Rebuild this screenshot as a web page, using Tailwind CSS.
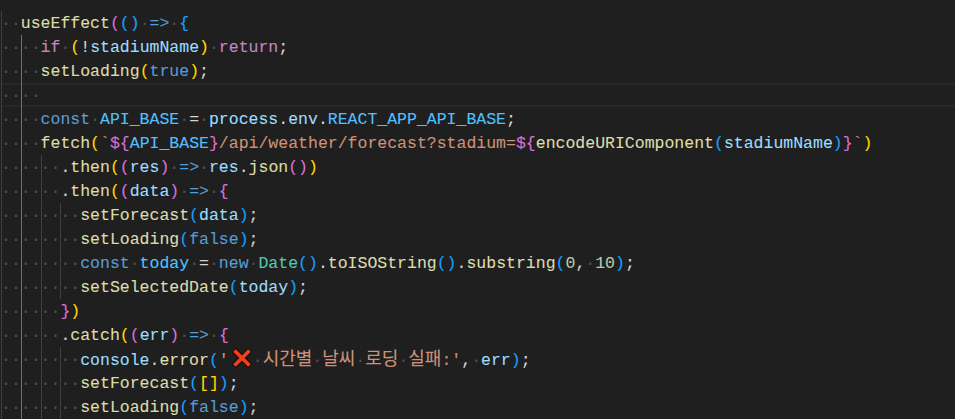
<!DOCTYPE html>
<html lang="en">
<head>
  <meta charset="UTF-8">
  <title>useEffect</title>
  <script src="https://cdn.jsdelivr.net/npm/@tailwindcss/browser@4"></script>
</head>
<body class="bg-[#1f1f1f] overflow-hidden">
  <div class="w-[955px] h-[419px] overflow-hidden pt-[11px] pl-px font-['Liberation_Mono','Noto_Sans_CJK_KR',monospace] text-[16.5px] text-[#d4d4d4] [-webkit-text-stroke:0.1px] [&>div]:whitespace-pre [&>div]:h-6 [&>div]:leading-[26px] [&_i]:not-italic [&_i]:inline-block [&_i]:w-[19.8px] [&_i]:h-6 [&_i]:align-top [&_i]:text-[#505050] [&_b]:font-normal [&_b]:text-[#505050]">
    <div><i class="shadow-[inset_1px_0_0_#404040]">··</i><span class="text-[#dcdcaa]">useEffect</span><span class="text-[#da70d6]">(</span><span class="text-[#179fff]">()</span><b>·</b><span class="text-[#569cd6]">=&gt;</span><b>·</b><span class="text-[#179fff]">{</span></div>
    <div><i class="shadow-[inset_1px_0_0_#404040]">··</i><i class="shadow-[inset_1px_0_0_#707070]">··</i><span class="text-[#c586c0]">if</span><b>·</b><span class="text-[#ffd700]">(</span>!<span class="text-[#9cdcfe]">stadiumName</span><span class="text-[#ffd700]">)</span><b>·</b><span class="text-[#c586c0]">return</span>;</div>
    <div><i class="shadow-[inset_1px_0_0_#404040]">··</i><i class="shadow-[inset_1px_0_0_#707070]">··</i><span class="text-[#dcdcaa]">setLoading</span><span class="text-[#ffd700]">(</span><span class="text-[#569cd6]">true</span><span class="text-[#ffd700]">)</span>;</div>
    <div class="shadow-[inset_0_2px_0_#282828,inset_0_-2px_0_#282828]"><i class="shadow-[inset_1px_0_0_#404040]">··</i><i class="shadow-[inset_1px_0_0_#707070]">··</i></div>
    <div><i class="shadow-[inset_1px_0_0_#404040]">··</i><i class="shadow-[inset_1px_0_0_#707070]">··</i><span class="text-[#569cd6]">const</span><b>·</b><span class="text-[#4fc1ff]">API_BASE</span><b>·</b>=<b>·</b><span class="text-[#9cdcfe]">process</span>.<span class="text-[#9cdcfe]">env</span>.<span class="text-[#4fc1ff]">REACT_APP_API_BASE</span>;</div>
    <div><i class="shadow-[inset_1px_0_0_#404040]">··</i><i class="shadow-[inset_1px_0_0_#707070]">··</i><span class="text-[#dcdcaa]">fetch</span><span class="text-[#ffd700]">(</span><span class="text-[#ce9178]">`</span><span class="text-[#da70d6]">${</span><span class="text-[#4fc1ff]">API_BASE</span><span class="text-[#da70d6]">}</span><span class="text-[#ce9178]">/api/weather/forecast?stadium=</span><span class="text-[#da70d6]">${</span><span class="text-[#dcdcaa]">encodeURIComponent</span><span class="text-[#179fff]">(</span><span class="text-[#9cdcfe]">stadiumName</span><span class="text-[#179fff]">)</span><span class="text-[#da70d6]">}</span><span class="text-[#ce9178]">`</span><span class="text-[#ffd700]">)</span></div>
    <div><i class="shadow-[inset_1px_0_0_#404040]">··</i><i class="shadow-[inset_1px_0_0_#707070]">··</i><i class="shadow-[inset_1px_0_0_#404040]">··</i><span>.</span><span class="text-[#dcdcaa]">then</span><span class="text-[#ffd700]">(</span><span class="text-[#da70d6]">(</span><span class="text-[#9cdcfe]">res</span><span class="text-[#da70d6]">)</span><b>·</b><span class="text-[#569cd6]">=&gt;</span><b>·</b><span class="text-[#9cdcfe]">res</span>.<span class="text-[#dcdcaa]">json</span><span class="text-[#da70d6]">()</span><span class="text-[#ffd700]">)</span></div>
    <div><i class="shadow-[inset_1px_0_0_#404040]">··</i><i class="shadow-[inset_1px_0_0_#707070]">··</i><i class="shadow-[inset_1px_0_0_#404040]">··</i><span>.</span><span class="text-[#dcdcaa]">then</span><span class="text-[#ffd700]">(</span><span class="text-[#da70d6]">(</span><span class="text-[#9cdcfe]">data</span><span class="text-[#da70d6]">)</span><b>·</b><span class="text-[#569cd6]">=&gt;</span><b>·</b><span class="text-[#da70d6]">{</span></div>
    <div><i class="shadow-[inset_1px_0_0_#404040]">··</i><i class="shadow-[inset_1px_0_0_#707070]">··</i><i class="shadow-[inset_1px_0_0_#404040]">··</i><i class="shadow-[inset_1px_0_0_#404040]">··</i><span class="text-[#dcdcaa]">setForecast</span><span class="text-[#179fff]">(</span><span class="text-[#9cdcfe]">data</span><span class="text-[#179fff]">)</span>;</div>
    <div><i class="shadow-[inset_1px_0_0_#404040]">··</i><i class="shadow-[inset_1px_0_0_#707070]">··</i><i class="shadow-[inset_1px_0_0_#404040]">··</i><i class="shadow-[inset_1px_0_0_#404040]">··</i><span class="text-[#dcdcaa]">setLoading</span><span class="text-[#179fff]">(</span><span class="text-[#569cd6]">false</span><span class="text-[#179fff]">)</span>;</div>
    <div><i class="shadow-[inset_1px_0_0_#404040]">··</i><i class="shadow-[inset_1px_0_0_#707070]">··</i><i class="shadow-[inset_1px_0_0_#404040]">··</i><i class="shadow-[inset_1px_0_0_#404040]">··</i><span class="text-[#569cd6]">const</span><b>·</b><span class="text-[#4fc1ff]">today</span><b>·</b>=<b>·</b><span class="text-[#569cd6]">new</span><b>·</b><span class="text-[#4ec9b0]">Date</span><span class="text-[#179fff]">()</span>.<span class="text-[#dcdcaa]">toISOString</span><span class="text-[#179fff]">()</span>.<span class="text-[#dcdcaa]">substring</span><span class="text-[#179fff]">(</span><span class="text-[#b5cea8]">0</span>,<b>·</b><span class="text-[#b5cea8]">10</span><span class="text-[#179fff]">)</span>;</div>
    <div><i class="shadow-[inset_1px_0_0_#404040]">··</i><i class="shadow-[inset_1px_0_0_#707070]">··</i><i class="shadow-[inset_1px_0_0_#404040]">··</i><i class="shadow-[inset_1px_0_0_#404040]">··</i><span class="text-[#dcdcaa]">setSelectedDate</span><span class="text-[#179fff]">(</span><span class="text-[#9cdcfe]">today</span><span class="text-[#179fff]">)</span>;</div>
    <div><i class="shadow-[inset_1px_0_0_#404040]">··</i><i class="shadow-[inset_1px_0_0_#707070]">··</i><i class="shadow-[inset_1px_0_0_#404040]">··</i><span class="text-[#da70d6]">}</span><span class="text-[#ffd700]">)</span></div>
    <div><i class="shadow-[inset_1px_0_0_#404040]">··</i><i class="shadow-[inset_1px_0_0_#707070]">··</i><i class="shadow-[inset_1px_0_0_#404040]">··</i><span>.</span><span class="text-[#dcdcaa]">catch</span><span class="text-[#ffd700]">(</span><span class="text-[#da70d6]">(</span><span class="text-[#9cdcfe]">err</span><span class="text-[#da70d6]">)</span><b>·</b><span class="text-[#569cd6]">=&gt;</span><b>·</b><span class="text-[#da70d6]">{</span></div>
    <div><i class="shadow-[inset_1px_0_0_#404040]">··</i><i class="shadow-[inset_1px_0_0_#707070]">··</i><i class="shadow-[inset_1px_0_0_#404040]">··</i><i class="shadow-[inset_1px_0_0_#404040]">··</i><span class="text-[#9cdcfe]">console</span>.<span class="text-[#dcdcaa]">error</span><span class="text-[#179fff]">(</span><span class="text-[#ce9178]">'</span><svg class="inline-block align-top w-6 h-6" viewBox="0 0 24 24"><path d="M5 3L21 19M21 3L5 19" stroke="#1a0a08" stroke-width="6"/><path d="M5.500 3.500L20.500 18.500M20.500 3.500L5.500 18.500" stroke="#f0401f" stroke-width="3.800"/></svg><b>·</b><span class="text-[#ce9178] text-[18px]">시간별</span><b>·</b><span class="text-[#ce9178] text-[18px]">날씨</span><b>·</b><span class="text-[#ce9178] text-[18px]">로딩</span><b>·</b><span class="text-[#ce9178] text-[18px]">실패</span><span class="text-[#ce9178]">:'</span>,<b>·</b><span class="text-[#9cdcfe]">err</span><span class="text-[#179fff]">)</span>;</div>
    <div><i class="shadow-[inset_1px_0_0_#404040]">··</i><i class="shadow-[inset_1px_0_0_#707070]">··</i><i class="shadow-[inset_1px_0_0_#404040]">··</i><i class="shadow-[inset_1px_0_0_#404040]">··</i><span class="text-[#dcdcaa]">setForecast</span><span class="text-[#179fff]">(</span><span class="text-[#ffd700]">[]</span><span class="text-[#179fff]">)</span>;</div>
    <div><i class="shadow-[inset_1px_0_0_#404040]">··</i><i class="shadow-[inset_1px_0_0_#707070]">··</i><i class="shadow-[inset_1px_0_0_#404040]">··</i><i class="shadow-[inset_1px_0_0_#404040]">··</i><span class="text-[#dcdcaa]">setLoading</span><span class="text-[#179fff]">(</span><span class="text-[#569cd6]">false</span><span class="text-[#179fff]">)</span>;</div>
  </div>
</body>
</html>
